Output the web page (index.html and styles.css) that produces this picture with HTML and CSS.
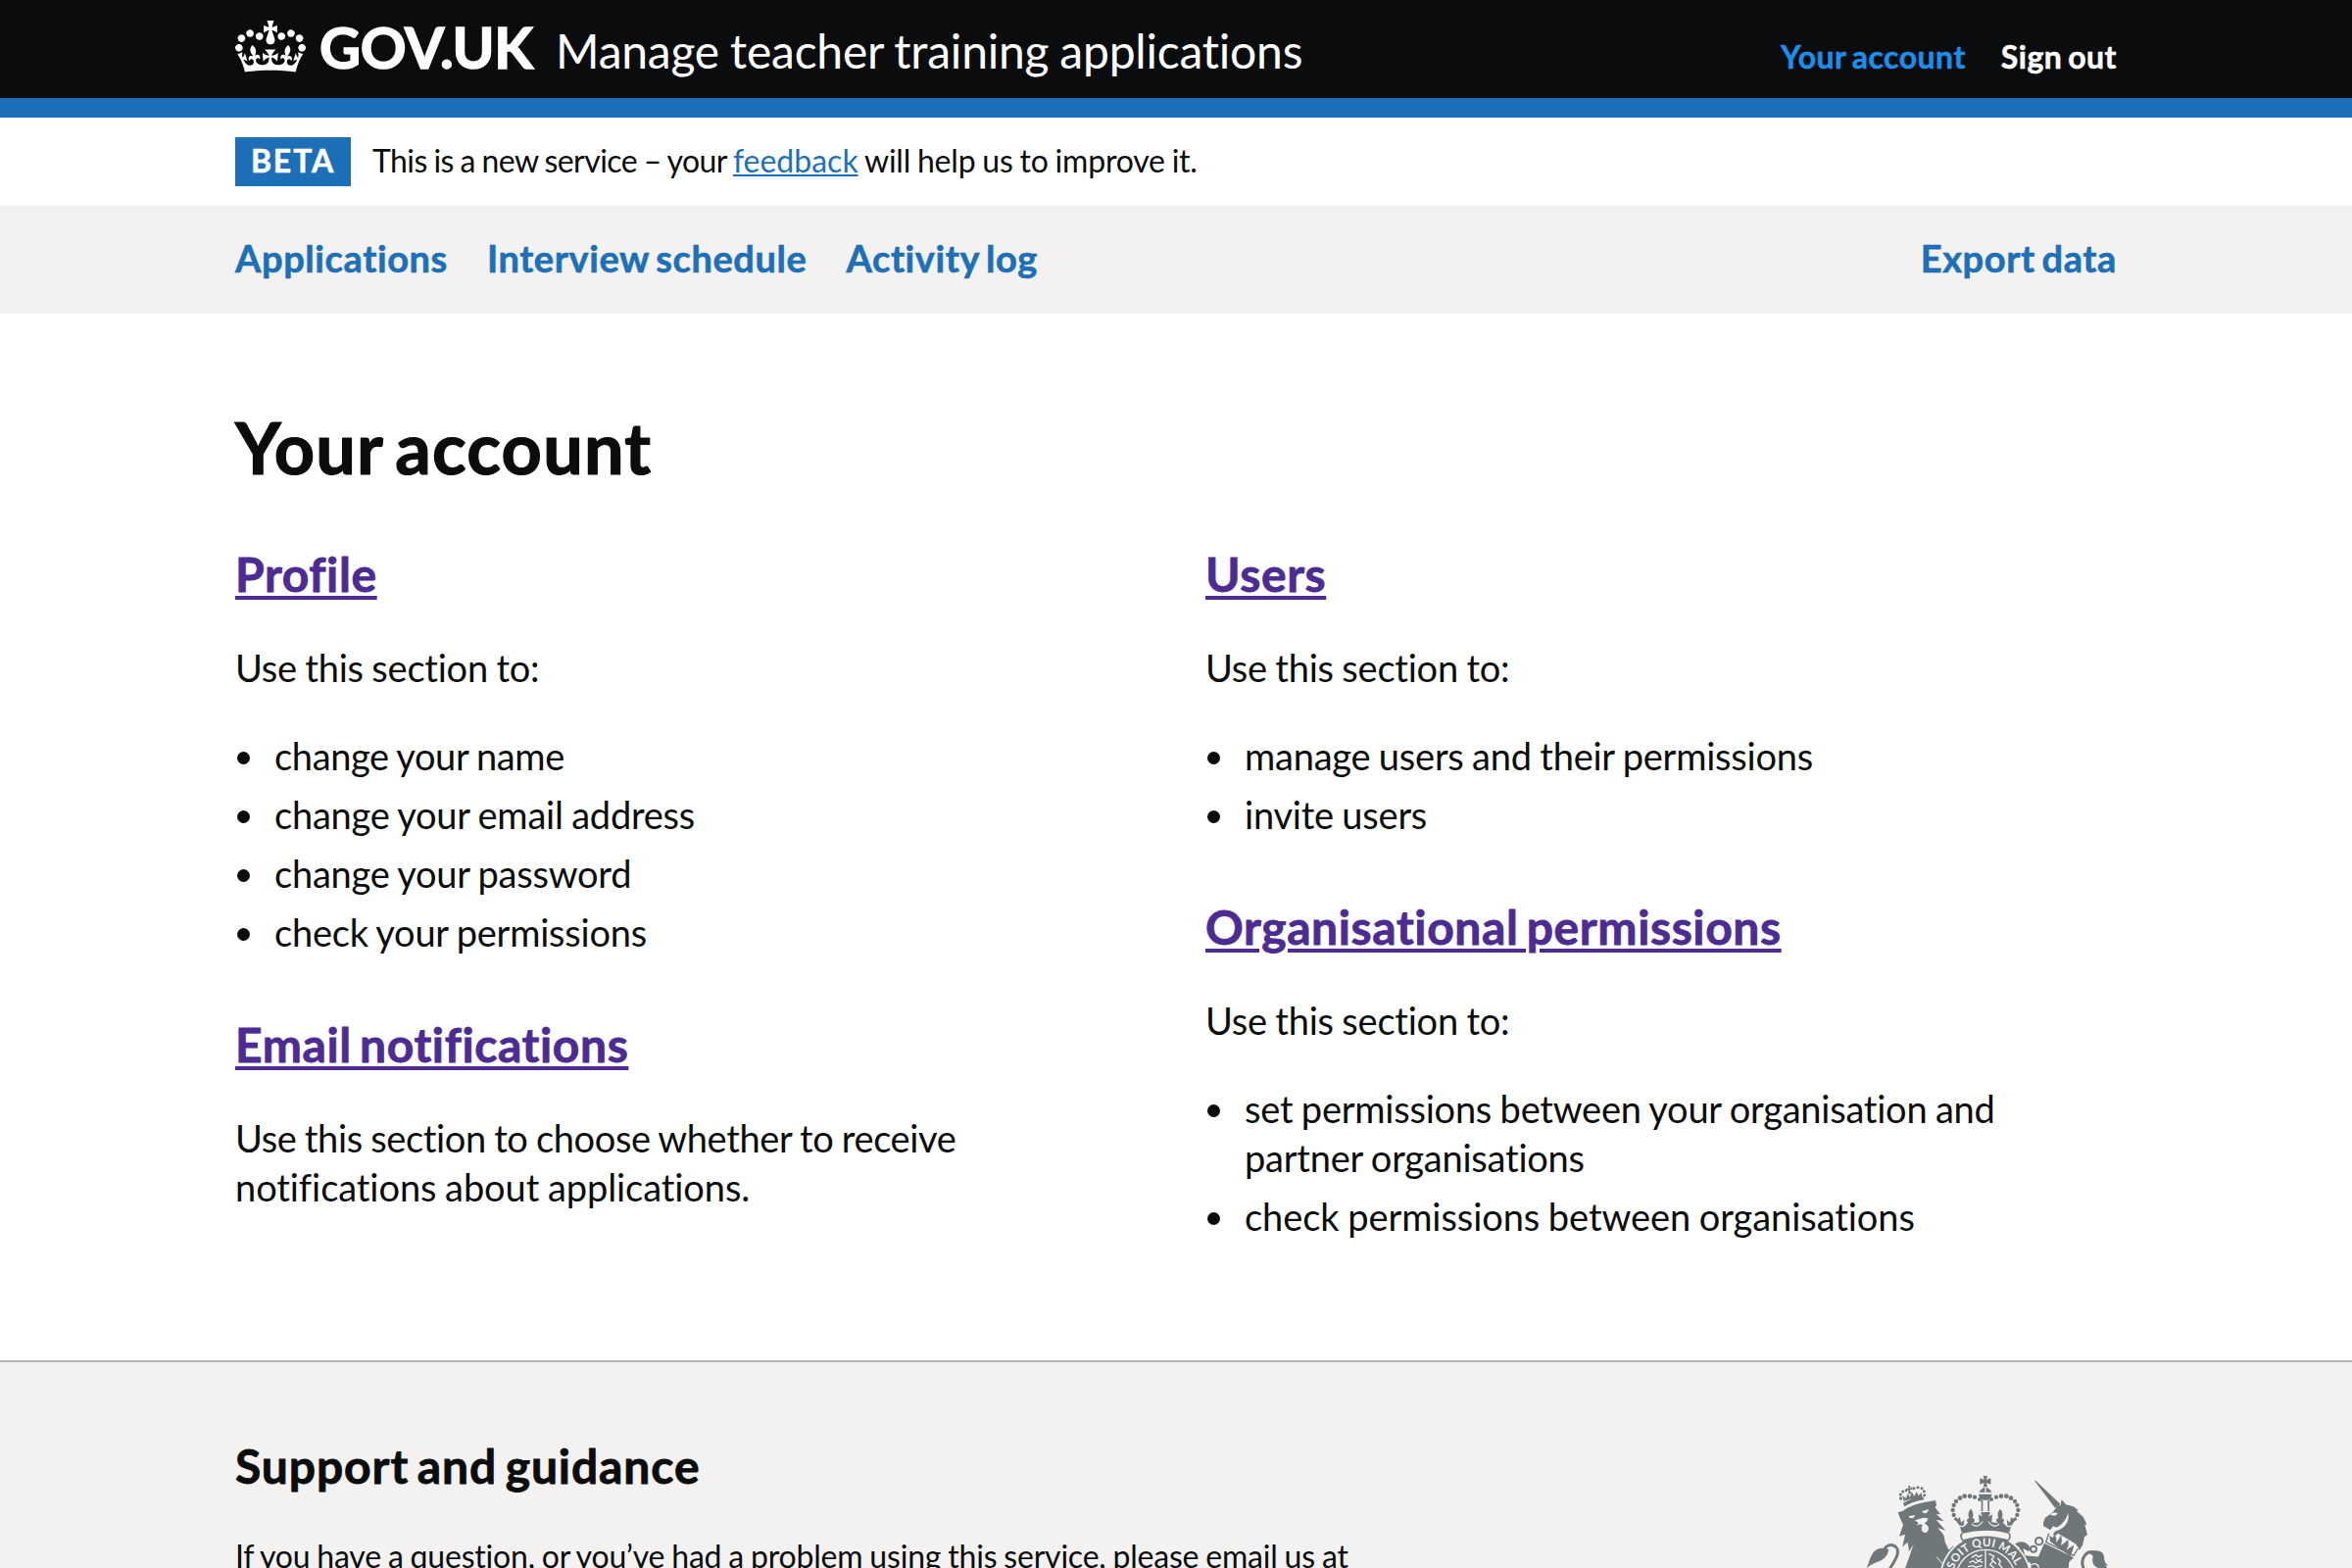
FILE: index.html
```html
<!DOCTYPE html>
<html lang="en">
<head>
<meta charset="utf-8">
<title>Your account - Manage teacher training applications - GOV.UK</title>
<link rel="stylesheet" href="styles.css">
</head>
<body>
<header class="header">
  <div class="container header-row">
    <svg class="crown" viewBox="0 0 132 97" aria-hidden="true"><path fill="currentColor" fill-rule="evenodd" d="M25 30.2c3.5 1.5 7.7-.2 9.1-3.7 1.5-3.6-.2-7.8-3.9-9.2-3.6-1.4-7.6.3-9.1 3.9-1.4 3.5.3 7.5 3.9 9zM9 39.5c3.6 1.5 7.8-.2 9.2-3.7 1.5-3.6-.2-7.8-3.9-9.1-3.6-1.5-7.6.2-9.1 3.8-1.4 3.5.3 7.5 3.8 9zM4.4 57.2c3.5 1.5 7.7-.2 9.1-3.8 1.5-3.6-.2-7.7-3.9-9.1-3.5-1.5-7.6.3-9.1 3.8-1.4 3.5.3 7.6 3.9 9.1zm38.3-21.4c3.5 1.5 7.7-.2 9.1-3.8 1.5-3.6-.2-7.7-3.9-9.1-3.6-1.5-7.6.3-9.1 3.8-1.3 3.6.4 7.7 3.9 9.1zm64.4-5.6c-3.6 1.5-7.8-.2-9.1-3.7-1.5-3.6.2-7.8 3.8-9.2 3.6-1.4 7.7.3 9.2 3.9 1.3 3.5-.4 7.5-3.9 9zm15.9 9.3c-3.6 1.5-7.7-.2-9.1-3.7-1.5-3.6.2-7.8 3.7-9.1 3.6-1.5 7.7.2 9.2 3.8 1.5 3.5-.3 7.5-3.8 9zm4.7 17.7c-3.6 1.5-7.8-.2-9.2-3.8-1.5-3.6.2-7.7 3.9-9.1 3.6-1.5 7.7.3 9.2 3.8 1.3 3.5-.4 7.6-3.9 9.1zM89.3 35.8c-3.6 1.5-7.8-.2-9.2-3.8-1.4-3.6.2-7.7 3.9-9.1 3.6-1.5 7.7.3 9.2 3.8 1.4 3.6-.3 7.7-3.9 9.1zM69.7 17.7l8.9 4.7V9.3l-8.9 2.8c-.2-.3-.5-.6-.9-.9L72.4 0H59.6l3.5 11.2c-.3.3-.6.5-.9.9l-8.8-2.8v13.1l8.8-4.7c.3.3.6.7.9.9l-5 15.4v.1c-.2.8-.4 1.6-.4 2.4 0 4.1 3.1 7.5 7 8.1h.2c.3 0 .7.1 1 .1.4 0 .7 0 1-.1h.2c4-.6 7.1-4.1 7.1-8.1 0-.8-.1-1.7-.4-2.4V34l-5.1-15.4c.4-.2.7-.6 1-.9zM66 92.8c16.9 0 32.8 1.1 47.1 3.2 4-16.9 8.9-26.7 14-33.5l-9.6-3.4c1 4.9 1.1 7.2 0 10.2-1.5-1.4-3-4.3-4.2-8.7L108.6 76c2.8-2 5-3.2 7.5-3.3-4.4 9.4-10 11.9-13.6 11.2-4.3-.8-6.3-4.6-5.6-7.9 1-4.7 5.7-5.9 8-.5 4.3-8.7-3-11.4-7.6-8.8 7.1-7.2 7.9-13.5 2.1-21.1-8 6.1-8.1 12.3-4.5 20.8-4.7-5.4-12.1-2.5-9.5 6.2 3.4-5.2 7.9-2 7.2 3.1-.6 4.3-6.4 7.8-13.5 7.2-10.3-.9-10.9-8-11.2-13.8 2.5-.5 7.1 1.8 11 7.3L80.2 60c-4.1 4.4-8 5.3-12.3 5.4 1.4-4.4 8-11.6 8-11.6H55.5s6.4 7.2 7.9 11.6c-4.2-.1-8-1-12.3-5.4l1.4 16.4c3.9-5.5 8.5-7.7 10.9-7.3-.3 5.8-.9 12.8-11.1 13.8-7.2.6-12.9-2.9-13.5-7.2-.7-5 3.8-8.3 7.1-3.1 2.7-8.7-4.6-11.6-9.4-6.2 3.7-8.5 3.6-14.7-4.6-20.8-5.8 7.6-5 13.9 2.2 21.1-4.7-2.6-11.9.1-7.7 8.8 2.3-5.5 7.1-4.2 8.1.5.7 3.3-1.3 7.1-5.7 7.9-3.5.7-9-1.8-13.5-11.2 2.5.1 4.7 1.3 7.5 3.3l-4.7-15.4c-1.2 4.4-2.7 7.2-4.3 8.7-1.1-3-.9-5.3 0-10.2l-9.5 3.4c5 6.9 9.9 16.7 14 33.5 14.8-2.1 30.8-3.2 47.7-3.2z"/></svg>
    <span class="logotype">GOV.UK</span>
    <span class="service-name">Manage teacher training applications</span>
    <nav class="header-links">
      <a class="header-link header-link-active">Your account</a>
      <a class="header-link">Sign out</a>
    </nav>
  </div>
</header>

<div class="container phase-banner">
  <strong class="tag">BETA</strong>
  <span class="phase-text">This is a new service – your <a class="feedback">feedback</a><span class="phase-end"> will help us to improve it.</span></span>
</div>

<div class="primary-nav">
  <nav class="container nav-row">
    <a class="nav-link">Applications</a>
    <a class="nav-link">Interview schedule</a>
    <a class="nav-link">Activity log</a>
    <a class="nav-link nav-link-end">Export data</a>
  </nav>
</div>

<main class="container main">
  <h1 class="page-title">Your account</h1>
  <div class="columns">
    <div class="column">
      <section class="section">
        <h2 class="heading"><a class="heading-link">Profile</a></h2>
        <p class="body">Use this section to:</p>
        <ul class="list">
          <li class="tight">change your name</li>
          <li>change your email address</li>
          <li>change your password</li>
          <li>check your permissions</li>
        </ul>
      </section>
      <section class="section">
        <h2 class="heading"><a class="heading-link">Email notifications</a></h2>
        <p class="body"><span class="tight">Use this section to choose whether to receive</span> <span class="loose">notifications about applications.</span></p>
      </section>
    </div>
    <div class="column">
      <section class="section">
        <h2 class="heading"><a class="heading-link">Users</a></h2>
        <p class="body">Use this section to:</p>
        <ul class="list">
          <li>manage users and their permissions</li>
          <li>invite users</li>
        </ul>
      </section>
      <section class="section">
        <h2 class="heading"><a class="heading-link">Organisational permissions</a></h2>
        <p class="body">Use this section to:</p>
        <ul class="list">
          <li>set permissions between your organisation and partner organisations</li>
          <li class="loose">check permissions between organisations</li>
        </ul>
      </section>
    </div>
  </div>
</main>

<footer class="footer">
  <div class="container footer-row">
    <div class="footer-text">
      <h2 class="footer-heading">Support and guidance</h2>
      <p class="footer-body">If you have a question, or you’ve had a problem using this service, please email us at</p>
    </div>
    <svg class="crest" viewBox="60 30 780 300" aria-hidden="true">
      <defs>
        <path id="motto" d="M336 366a102 102 0 0 1 204 0"/>
        <g id="crown-half">
          <g>
            <circle cx="420" cy="120" r="6"/><circle cx="405" cy="113" r="6.5"/><circle cx="390" cy="110" r="7"/><circle cx="374" cy="110" r="7"/><circle cx="360" cy="116" r="7"/><circle cx="348" cy="126" r="6.5"/><circle cx="341" cy="138" r="6.5"/><circle cx="338" cy="153" r="6.5"/><circle cx="341" cy="168" r="6.5"/><circle cx="347" cy="180" r="5"/>
          </g>
          <path d="M346 184l14-9 3 16 10-9-2 18 14-8c-6-6-5-14 3-14-4-12-3-20 5-29 8 9 9 17 5 29 8 0 9 8 3 14l18-2-2-24 12 7-4-14h13v60h-74c-2-15-10-27-18-35z"/>
          <path fill="none" stroke="#f3f2f1" stroke-width="3.500" d="M358 200c8 5 16 3 20-6m18 0c5 9 20 10 27 1l8-10"/>
        </g>
      </defs>
      <g class="lion">
        <path d="M170 160l15-5 16-10 25-10 24-6 35-6 3 14-4 8 16 21-13-1 24 22-24-5 29 33-24-8 18 22 5 24 11 22 14-14v26l-30 50H190l15-42 13-38-14 22-4-28-16 14 8-38-18 6 12-36-8-16z"/>
        <path d="M187 138l-9-35 13-16 13-5h22l18-4 8 14 1 32z" fill="#f3f2f1"/>
        <path d="M190 142l-4-11c17-10 39-18 61-20l3 10c-22 3-42 10-60 21zM188 126l-4-18 10 9 6-14 7 11 5-18 8 14 7-13 6 11 9-9 2 16c-20 0-39 4-56 11z"/>
        <path d="M202 78h6l-2 8 8-4v9l-7-2 3 14-8 1v-13l-7 3-1-8 8 1z"/>
        <circle cx="179" cy="117" r="5"/><circle cx="178" cy="105" r="4.500"/><circle cx="185" cy="96" r="4.500"/><circle cx="195" cy="93" r="4"/><circle cx="219" cy="86" r="4.500"/><circle cx="231" cy="83" r="4.500"/><circle cx="243" cy="86" r="4.500"/><circle cx="250" cy="95" r="4.500"/><circle cx="251" cy="107" r="4.500"/>
        <path fill="#f3f2f1" d="M185 151c18-12 42-21 66-23l-1-4c-24 2-48 11-67 23zM202 172l21-4c-5 12-15 13-21 4zM243 157l21-7c-2 13-13 17-21 7zM222 184l26-8 14 2-3 8-8 8c15 4 17 20 5 28-13 1-18-13-10-24l-10-2-8 4 4-9z"/>
        <path fill="none" stroke="currentColor" stroke-width="9" d="M126 275c16-27 50-15 42 14-4 15-14 28-23 44"/>
        <path d="M73 332c9-15 8-31 22-50 13-17 32-14 47-10-4 24-17 33-34 39-15 5-25 11-35 21z"/>
        <path fill="none" stroke="#f3f2f1" stroke-width="3" d="M288 296l30 34"/>
      </g>
      <g class="unicorn">
        <path d="M588 63l5 1 75 71-17 11zM668 138l3-18 13 16 23 6 15 11-5 3 20 17 11 23-6 2 8 31-9 5-6 27-10 14-10-18-21-13-34-20-25 20 22-37-12-5-8 12-8-5-14-8v-9l5-15 24-18 14-18z"/>
        <path fill="#f3f2f1" d="M636 166c9-7 18-7 23-3-5 8-14 9-23 3zM691 162c6 30-13 50-50 59l-7-8c31-7 47-22 57-51z"/>
        <path fill="#f3f2f1" d="M631 220l92 47-13 29-87-44z"/>
        <path fill="none" stroke="currentColor" stroke-width="4" d="M632 224l-9 27 85 41 13-22"/>
        <path d="M636 249l-2-19 10 8 5-13 6 14-1 13 9-11 6-13 3 17-3 16 12-9 10-9 1 18-7 14 12-8 12-7-4 16-7 18z"/>
        <path d="M618 254l90 44-14 13-2 22h-98l7-40z"/>
        <path d="M528 257c14-12 31-8 40 1l10 14-9 7-16-9 6 22 45 4 4 36h-30l-2-18-24-6-14-20 4-20z"/>
        <g fill="none" stroke="currentColor" stroke-width="6"><circle cx="602" cy="248" r="11"/><circle cx="585" cy="272" r="9"/></g>
        <path fill="none" stroke="#f3f2f1" stroke-width="4" d="M578 321c8-8 22-4 23 8M543 300l16 30"/>
        <path fill="none" stroke="currentColor" stroke-width="9" d="M739 333c-14-31 8-62 38-49"/>
        <path d="M753 282c21-10 46-6 48 13 0 14 4 22 13 28l-9-1 7 10h-20c-22-4-30-15-25-39z"/>
      </g>
      <circle cx="438" cy="366" r="141" fill="#f3f2f1"/>
      <circle cx="438" cy="366" r="136"/>
      <circle cx="438" cy="366" r="94" fill="#f3f2f1"/>
      <circle cx="438" cy="366" r="90"/>
      <path d="M438 274v60M395 298l14-8 8 6 12-6M388 313l12-5 8 7 10-7 12 5M384 326l16-3 8 5 20-6M408 300l6 9 12-6M448 286l16 8-7 10 14 14M460 310l-8 10 12 9M475 300l9 10-5 8 10 12" fill="none" stroke="#f3f2f1" stroke-width="4"/>
      <text class="crest-text"><textPath href="#motto" startOffset="48%" text-anchor="middle">SOIT QUI MAL</textPath></text>
      <path fill="#f3f2f1" d="M358 215h160l-8 31-72-12-72 12z"/>
      <use href="#crown-half"/>
      <use href="#crown-half" transform="matrix(-1 0 0 1 876 0)"/>
      <path fill="#f3f2f1" d="M432 124h12v32h-12z"/>
      <path d="M431 48h13l-3 12 13-5v19l-13-5 3 13h-13l3-13-13 5V55l13 5zM432 84h11l11 8 3 6h-38l3-6zM417 104h41c-1 11-9 17-14 18h-12c-6-1-14-7-15-18zM425 122h5v34h-5zM445 122h5v34h-5zM423 161h30l-8 14 11-5v22l-11-6 2 15h-18l2-15-11 6v-22l11 5z"/>
      <path d="M436 84h4v14h-4z" fill="#f3f2f1"/>
      <path fill="#f3f2f1" stroke="currentColor" stroke-width="5" d="M368 222c44-12 96-12 140 0 8 8 5 18-1 24-43-14-95-14-138 0-6-7-9-16-1-24z"/>
    </svg>
  </div>
</footer>
</body>
</html>
```
FILE: styles.css
```css
* { box-sizing: border-box; }

html, body { margin: 0; height: 1600px; overflow: hidden; }

body {
  background: #fff;
  color: #0b0c0c;
  font-family: Lato, "Liberation Sans", sans-serif;
  font-size: 38px;
  line-height: 50px;
  letter-spacing: -0.23px;
  word-spacing: -1px;
  font-variant-ligatures: none;
}

h1, h2, p, ul { margin: 0; padding: 0; }

.container { width: 1920px; margin: 0 auto; }

/* Header */
.header { height: 120px; background: #0b0c0e; color: #fff; border-bottom: 20px solid #1d70b8; }
.header-row { display: flex; align-items: baseline; padding-top: 18px; }
.crown { width: 72px; height: 53px; margin: 3px 14px 0 0; align-self: flex-start; flex: none; }
.logotype { width: 241px; font-size: 58px; line-height: 60px; font-weight: 700; letter-spacing: -0.3px; -webkit-text-stroke: 1.500px currentColor; }
.service-name { font-size: 48px; line-height: 60px; letter-spacing: -0.22px; word-spacing: -1px; }
.header-links { display: flex; gap: 36px; margin-left: auto; }
.header-link { font-size: 32px; font-weight: 700; line-height: 40px; letter-spacing: 0.5px; word-spacing: -2.500px; -webkit-text-stroke: 0.5px currentColor; }
.header-link-active { color: #1d8feb; }

/* Phase banner */
.phase-banner { display: flex; height: 90px; padding-top: 20px; font-size: 32px; line-height: 48px; }
.tag { width: 118px; height: 50px; margin-right: 22px; background: #1d70b8; color: #fff; text-align: center; font-weight: 700; letter-spacing: 1.900px; -webkit-text-stroke: 0.5px currentColor; }
.phase-text { letter-spacing: -0.56px; }
.phase-end { letter-spacing: -0.22px; }
.feedback { color: #1d70b8; letter-spacing: 0; text-decoration: underline 2px; text-underline-offset: 2px; }

/* Primary navigation */
.primary-nav { height: 110px; background: #f3f2f1; }
.nav-row { display: flex; gap: 40px; padding-top: 28px; }
.nav-link { color: #1d70b8; font-weight: 700; letter-spacing: 0.6px; word-spacing: -3px; -webkit-text-stroke: 0.6px currentColor; }
.nav-link-end { margin-left: auto; }

/* Main content */
.main { height: 1068px; padding-top: 96px; }
.page-title { font-size: 72px; line-height: 80px; letter-spacing: 1.200px; word-spacing: -6px; margin-bottom: 60px; -webkit-text-stroke: 1.200px currentColor; }
.columns { display: grid; grid-template-columns: 1fr 1fr; gap: 60px; }
.column { display: flex; flex-direction: column; gap: 60px; padding-right: 20px; }
.heading { font-size: 48px; line-height: 60px; letter-spacing: 0.6px; word-spacing: -4px; margin-bottom: 40px; -webkit-text-stroke: 0.8px currentColor; }
.heading-link { color: #4c2c92; text-decoration: underline 4px; text-underline-offset: 4px; }
.list { display: flex; flex-direction: column; gap: 10px; margin-top: 40px; list-style: none; }
.list li { display: grid; grid-template-columns: 40px 1fr; }
.list li::before { content: ""; width: 13px; height: 13px; margin: 21px 0 0 2px; border-radius: 50%; background: currentColor; }
.list .tight, .tight { letter-spacing: -0.36px; }
.list .loose, .loose { letter-spacing: -0.07px; }

/* Footer */
.footer { height: 212px; background: #f3f2f1; border-top: 2px solid #b1b4b6; overflow: hidden; }
.footer-row { display: flex; justify-content: space-between; }
.footer-text { padding-top: 76px; }
.footer-heading { font-size: 48px; line-height: 60px; letter-spacing: 0.9px; word-spacing: -4px; margin-bottom: 42px; -webkit-text-stroke: 0.8px currentColor; }
.footer-body { font-size: 32px; line-height: 40px; letter-spacing: -0.2px; }
.crest { width: 260px; height: 100px; margin-top: 110px; color: #6f777b; fill: currentColor; }
.crest-text { font-size: 35px; font-weight: 700; letter-spacing: 1px; fill: #f3f2f1; }
```
